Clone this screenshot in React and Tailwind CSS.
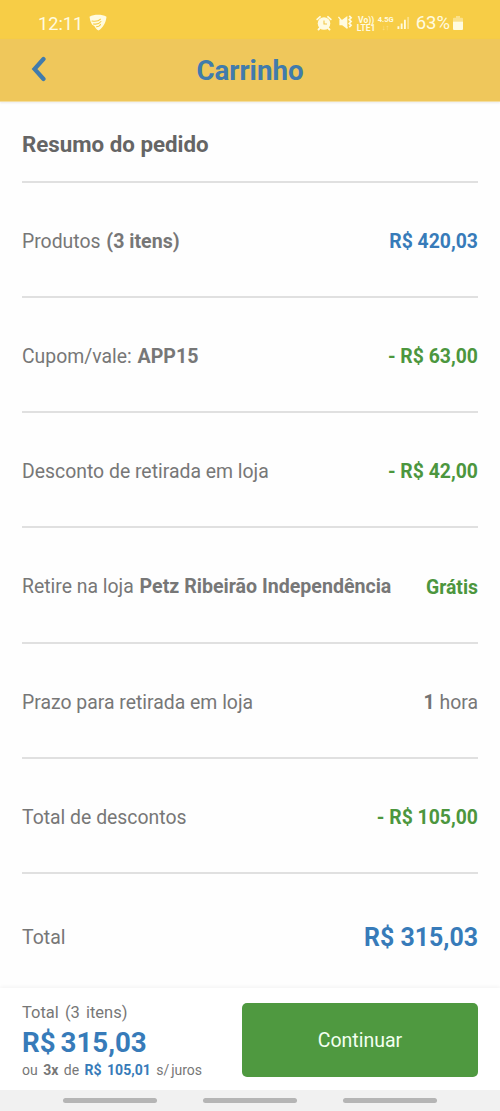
import React from "react";

const ITEMS = [
  { label: "Produtos ", strong: "(3 itens)", value: "R$ 420,03", color: "text-[#377bb9]" },
  { label: "Cupom/vale: ", strong: "APP15", value: "- R$ 63,00", color: "text-[#4c963e]" },
  { label: "Desconto de retirada em loja", value: "- R$ 42,00", color: "text-[#4c963e]" },
  { label: "Retire na loja ", strong: "Petz Ribeirão Independência", value: "Grátis", color: "text-[#4c963e]" },
  { label: "Prazo para retirada em loja", value: "1", suffix: " hora", color: "text-[#747474]" },
  { label: "Total de descontos", value: "- R$ 105,00", color: "text-[#4c963e]" },
];

export default function App() {
  return (
    <div className="flex h-[1111px] w-[500px] flex-col overflow-hidden bg-[#fefefe] font-['Roboto',sans-serif] text-[#777]">
      <StatusBar />

      <header className="grid h-[63px] shrink-0 grid-cols-[72px_1fr_72px] items-center border-b border-[#f3dda0] bg-[#efc75b] shadow-[0_1px_2px_rgba(0,0,0,0.08)]">
        <BackIcon />
        <h1 className="pt-px text-center text-[27.7px] leading-8 font-bold text-[#417bac]">Carrinho</h1>
      </header>

      <main className="flex flex-1 flex-col px-[22px]">
        <h2 className="h-[78.6px] pt-[27px] text-[22.3px] leading-[30px] font-bold whitespace-nowrap text-[#656565]">
          Resumo do pedido
        </h2>
        {ITEMS.map((item) => (
          <SummaryRow key={item.label} {...item} />
        ))}
        <div className="flex flex-1 items-center justify-between border-t-2 border-[#e0e0e0] pt-[12px]">
          <span className="text-[19.5px]">Total</span>
          <span className="text-[24.9px] font-bold text-[#377bb9]">R$ 315,03</span>
        </div>
      </main>

      <footer className="flex h-[102px] shrink-0 justify-between bg-white pr-[22px] pl-[22px] shadow-[0_-1px_4px_rgba(0,0,0,0.05)]">
        <div className="pt-[14px] whitespace-nowrap">
          <p className="text-[16.5px] leading-[22px] [word-spacing:2px]">Total (3 itens)</p>
          <p className="text-[27.7px] leading-[38px] font-bold text-[#377bb9] [word-spacing:-2px]">R$ 315,03</p>
          <p className="text-[14px] leading-[17px] [word-spacing:2px]">
            ou <b>3x</b> de <b className="text-[#377bb9]">R$ 105,01</b> s/<span className="ml-[2px]">juros</span>
          </p>
        </div>
        <button className="mt-[15px] h-[74px] w-[236px] rounded-[5px] bg-[#4f9940] pt-[2px] text-[19.5px] text-[#f3fff0]">
          Continuar
        </button>
      </footer>

      <nav className="flex h-[21px] shrink-0 items-center justify-center gap-[46px] bg-[#f1f1f1]">
        <span className="h-[5px] w-[94px] rounded-full bg-[#b5b5b5]" />
        <span className="h-[5px] w-[94px] rounded-full bg-[#b5b5b5]" />
        <span className="h-[5px] w-[94px] rounded-full bg-[#b5b5b5]" />
      </nav>
    </div>
  );
}

function SummaryRow({ label, strong, value, suffix, color }) {
  return (
    <div className="flex h-[115.3px] shrink-0 items-center justify-between border-t-2 border-[#e0e0e0] pt-[4px] text-[19.4px] whitespace-nowrap">
      <span>
        {label}
        {strong && <b className="ml-px text-[19.6px]">{strong}</b>}
      </span>
      <span>
        <b className={color}>{value}</b>
        {suffix}
      </span>
    </div>
  );
}

function StatusBar() {
  return (
    <div className="flex h-[39px] shrink-0 items-center bg-[#f7cd46] pt-[8px] pr-[37px] pl-[38px] text-[#fffbe0]">
      <span className="text-[18.2px]">12:11</span>
      <ShieldIcon />
      <div className="ml-auto flex items-center">
        <AlarmIcon />
        <MutedIcon />
        <span className="ml-[4px] w-[19px] text-center text-[8.5px] leading-[8px] font-bold">
          Vo))
          <br />
          LTE1
        </span>
        <span className="ml-[2px] w-4 text-center text-[7.5px] leading-[8px] font-bold">
          4.5G
          <br />
          <span className="opacity-50">↓↑</span>
        </span>
        <SignalIcon />
        <span className="ml-[6px] text-[18.5px]">63%</span>
        <BatteryIcon />
      </div>
    </div>
  );
}

function BackIcon() {
  return (
    <svg className="-mt-[2px] ml-[30px] h-7 w-4" viewBox="0 0 16 28" fill="none" stroke="#417bac" strokeWidth="4.2">
      <path d="M13.5 4 4.5 14l9 10" strokeLinecap="round" />
    </svg>
  );
}

function ShieldIcon() {
  return (
    <svg className="-mt-[3px] ml-[6px] h-[17px] w-[18px]" viewBox="0 0 18 18" preserveAspectRatio="none">
      <path fill="currentColor" d="M.5 3C5 .2 13 .2 17.5 3 17 9 14 15 9.5 17.5 7.5 16.5 6.5 15 5.5 13L3 11Q1 8 .5 3Z" />
      <path
        d="M3 7.5q6 1 8.500-2M4.500 10.500q5 1 7.500-2.500M7.500 13.500q3 0 4-2.500"
        fill="none"
        stroke="#f7cd46"
        strokeWidth="1.1"
        strokeLinecap="round"
      />
    </svg>
  );
}

function AlarmIcon() {
  return (
    <svg className="-mt-[2px] h-4 w-4" viewBox="0 0 16 16" fill="none" stroke="currentColor">
      <circle cx="8" cy="8.5" r="6.3" fill="currentColor" stroke="none" />
      <path d="M1.2 4.3 4 1.8M14.8 4.3 12 1.8M4 13l-1.5 1.5M12 13l1.5 1.5" strokeWidth="1.8" strokeLinecap="round" />
      <path d="M8 5.5v3.500h3" stroke="#f1c84b" strokeWidth="1.1" />
    </svg>
  );
}

function MutedIcon() {
  return (
    <svg className="-mt-[2px] ml-[5px] h-[15px] w-4" viewBox="0 0 16 16">
      <path fill="currentColor" d="M2 5h3l5.5-4v14L5 11H2Z" />
      <path d="m1 2 9.5 12" stroke="currentColor" strokeWidth="1.5" />
      <path d="m12.5 1 2 2-2 2 2 2-2 2 2 2-2 2" fill="none" stroke="currentColor" strokeWidth="1.8" />
    </svg>
  );
}

function SignalIcon() {
  return (
    <svg className="-mt-[2px] ml-[3px] h-[13px] w-[13px]" viewBox="0 0 13 14" fill="currentColor">
      <path d="M0 11h2v3H0zM3.5 8h2v6h-2zM7 4h2v10H7z" />
      <path d="M10.5 1h2v13h-2z" opacity=".45" />
    </svg>
  );
}

function BatteryIcon() {
  return (
    <svg className="-mt-[1px] ml-[3px] h-[14px] w-[10px]" viewBox="0 0 10 15" preserveAspectRatio="none" fill="currentColor">
      <path d="M3 0h4v2h2q1 0 1 1v3H0V3q0-1 1-1h2Z" opacity=".45" />
      <path d="M0 6h10v8q0 1-1 1H1q-1 0-1-1Z" />
    </svg>
  );
}
